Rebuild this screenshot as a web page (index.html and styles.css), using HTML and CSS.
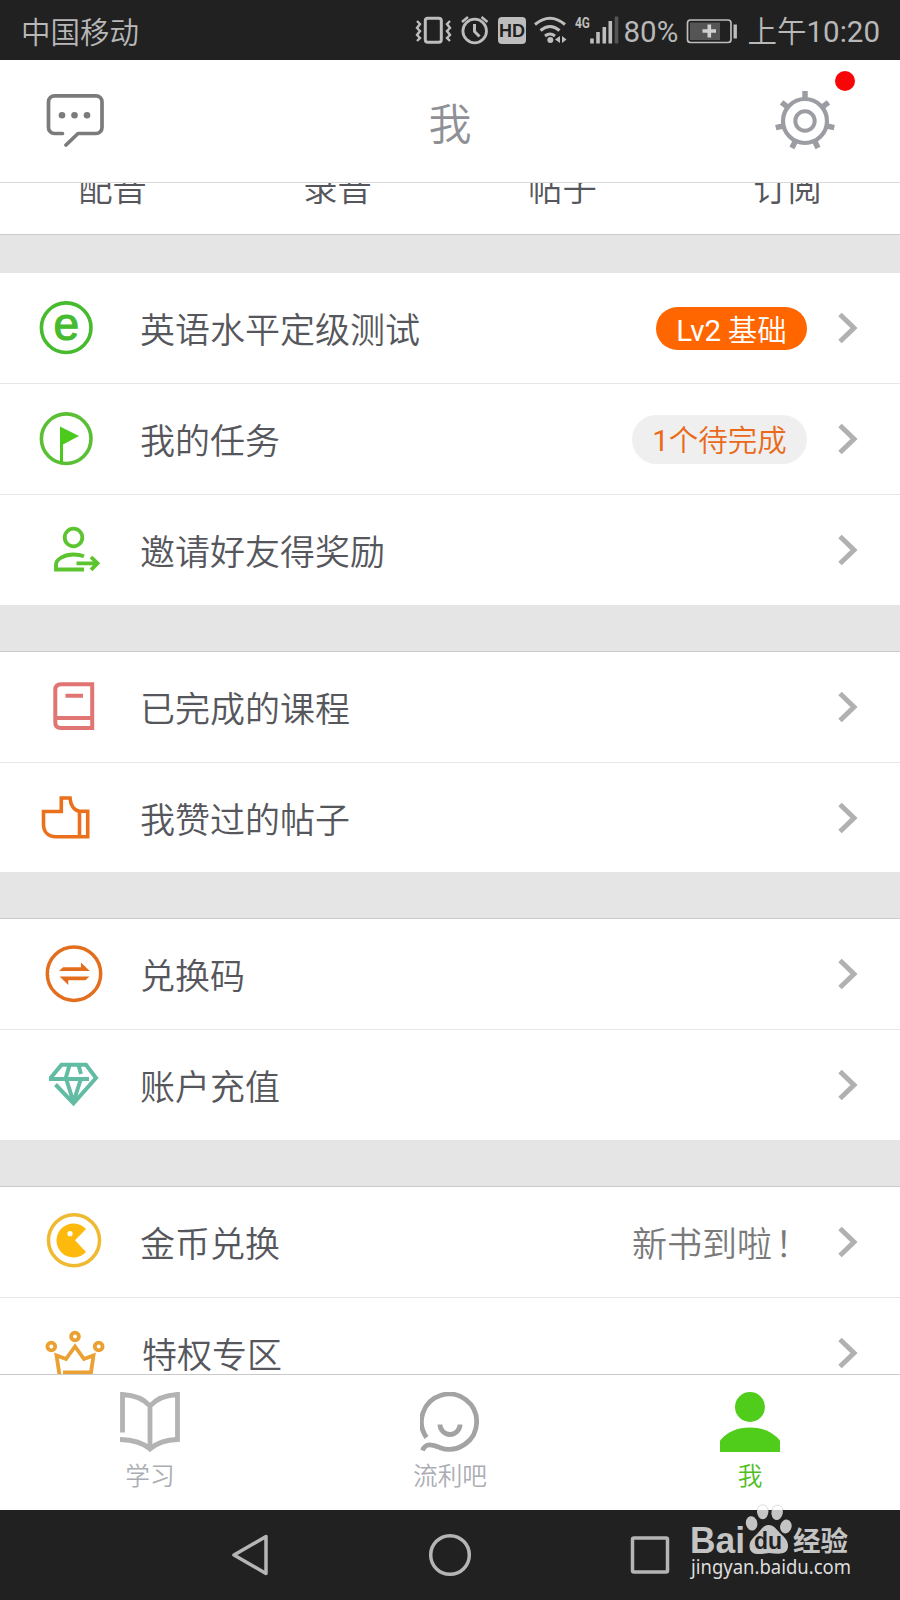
FILE: index.html
```
<!DOCTYPE html>
<html lang="zh-CN">
<head>
    <meta charset="UTF-8">
    <meta name="viewport" content="width=device-width, initial-scale=1.0">
    <title>我</title>
    <link rel="stylesheet" href="styles.css">
</head>
<body>
<div class="phone">
    <!-- Status bar -->
    <div class="status-bar">
        <span class="carrier">中国移动</span>
        <svg class="status-icons" width="209" height="60" viewBox="411 0 209 60" fill="none" stroke="#bdbdbd">
            <rect x="425.3" y="18.3" width="16" height="24" rx="2.5" stroke-width="3"/>
            <path d="M417 21l3 3-3 4 3 3-3 4 3 3-3 3M450 21l-3 3 3 4-3 3 3 4-3 3 3 3" stroke-width="2.4"/>
            <circle cx="474.7" cy="31" r="11.8" stroke-width="2.8"/>
            <path d="M474.5 24v7.5l5 5" stroke-width="3"/>
            <path d="M462 22l6-5M487.5 22l-6-5" stroke-width="2.6"/>
            <rect x="498" y="17" width="28" height="27" rx="4" fill="#bdbdbd" stroke="none"/>
            <text x="512" y="37.3" class="hd">HD</text>
            <path d="M535 24.5q15-12.5 30 0M540.5 30.5q9.5-8 19 0M545 36q5-4 10 0" stroke-width="3"/>
            <circle cx="550.3" cy="40" r="3" fill="#bdbdbd" stroke="none"/>
            <path d="M560 36v7l-5-3.5zM562 36v7l4.5-3.5z" fill="#bdbdbd" stroke="none"/>
            <text x="575" y="28" class="net" textLength="15" lengthAdjust="spacingAndGlyphs">4G</text>
            <path d="M592 38.5v5M598 32v11.5M604.3 27v16.5M610.3 21v22.5" stroke-width="3.6"/>
            <path d="M616.5 16.5v27" stroke="#555" stroke-width="3.6"/>
        </svg>
        <span class="percent">80%</span>
        <svg class="battery" width="52" height="60" viewBox="686 0 52 60">
            <rect x="687.5" y="20" width="43.5" height="22.5" rx="3" fill="none" stroke="#bdbdbd" stroke-width="1.7"/>
            <rect x="690" y="22.5" width="30" height="17.5" fill="#555"/>
            <path d="M709.3 24.5v13M702.5 31h13.5" stroke="#d0d0d0" stroke-width="3.6"/>
            <path d="M735.2 24.5v14" stroke="#bdbdbd" stroke-width="3.4"/>
        </svg>
        <span class="clock">上午<span class="latin">10:20</span></span>
    </div>

    <!-- Header -->
    <header class="header">
        <svg class="chat" width="64" height="56" viewBox="43 91 64 56" fill="none" stroke="#7b7b7b" stroke-width="3.7" stroke-linecap="round" stroke-linejoin="round">
            <path d="M62.5 133.5H54.5a6 6 0 0 1-6-6V101.8a6 6 0 0 1 6-6H96a6 6 0 0 1 6 6v25.7a6 6 0 0 1-6 6H78L66 145"/>
            <g fill="#7b7b7b" stroke="none"><circle cx="62" cy="115.2" r="3.3"/><circle cx="74.5" cy="115.2" r="3.3"/><circle cx="87" cy="115.2" r="3.3"/></g>
        </svg>
        <h1 class="title">我</h1>
        <div class="settings">
            <svg width="64" height="64" viewBox="-32 -32 64 64" fill="none" stroke="#9b9da3">
                <circle r="22" stroke-width="4.2"/>
                <circle r="9.7" stroke-width="4"/>
                <g stroke-width="5.5">
                    <path d="M0-22.5V-30"/>
                    <path d="M0-22.5V-30" transform="rotate(51.43)"/>
                    <path d="M0-22.5V-30" transform="rotate(102.86)"/>
                    <path d="M0-22.5V-30" transform="rotate(154.29)"/>
                    <path d="M0-22.5V-30" transform="rotate(205.71)"/>
                    <path d="M0-22.5V-30" transform="rotate(257.14)"/>
                    <path d="M0-22.5V-30" transform="rotate(308.57)"/>
                </g>
            </svg>
            <span class="red-dot"></span>
        </div>
    </header>

    <!-- Scrolled list -->
    <main class="content">
        <div class="stats">
            <span>配音</span>
            <span>录音</span>
            <span>帖子</span>
            <span>订阅</span>
        </div>

        <section class="group">
            <div class="row">
                <svg class="icon" viewBox="0 0 120 110">
                    <circle cx="66.2" cy="54.7" r="24.8" fill="none" stroke="#46bb2e" stroke-width="3.6"/>
                    <text x="66.2" y="66.5" class="e-mark">e</text>
                </svg>
                <span class="label">英语水平定级测试</span>
                <span class="badge level"><span class="latin">Lv2</span> 基础</span>
                <svg class="arrow" viewBox="0 0 20 32"><path d="M2 2.5l14 13.5-14 13.5"/></svg>
            </div>
            <div class="row">
                <svg class="icon" viewBox="0 0 120 110">
                    <circle cx="66.2" cy="54.7" r="24.8" fill="none" stroke="#5abf35" stroke-width="3.6"/>
                    <path d="M60 42.5L79 52 63 60.5V79H60z" fill="#4bc91c"/>
                </svg>
                <span class="label">我的任务</span>
                <span class="badge todo"><span class="latin">1</span>个待完成</span>
                <svg class="arrow" viewBox="0 0 20 32"><path d="M2 2.5l14 13.5-14 13.5"/></svg>
            </div>
            <div class="row">
                <svg class="icon" viewBox="0 0 120 110" fill="none" stroke="#5bc42f" stroke-width="3.8">
                    <circle cx="73.5" cy="42.5" r="8.8"/>
                    <path d="M84 61.3C80 59.7 77 59.5 73.5 59.5 64 59.5 56 64.5 56 69.5V74.5H84"/>
                    <path d="M76.5 68.3H97M91 62l6.5 6.3L91 74.8"/>
                </svg>
                <span class="label">邀请好友得奖励</span>
                <svg class="arrow" viewBox="0 0 20 32"><path d="M2 2.5l14 13.5-14 13.5"/></svg>
            </div>
        </section>

        <section class="group courses">
            <div class="row">
                <svg class="icon" viewBox="0 0 120 110" fill="none" stroke="#e07573" stroke-width="4">
                    <path d="M92.2 76V32.3H61q-5.7 0-5.7 5.7V70.5q0 5.5 5.7 5.5H94.2M92.2 32.3h2M55.3 66H92M65.5 43.8H83"/>
                </svg>
                <span class="label">已完成的课程</span>
                <svg class="arrow" viewBox="0 0 20 32"><path d="M2 2.5l14 13.5-14 13.5"/></svg>
            </div>
            <div class="row">
                <svg class="icon" viewBox="0 0 120 110" fill="none" stroke="#ea701b" stroke-width="3.6">
                    <path d="M43.5 48.5H61.3V35H70C70.5 42 74 47.5 79.5 48.3H87.7V73.7H56C48 73.7 43.5 69 43.5 61zM79.5 48V73"/>
                </svg>
                <span class="label">我赞过的帖子</span>
                <svg class="arrow" viewBox="0 0 20 32"><path d="M2 2.5l14 13.5-14 13.5"/></svg>
            </div>
        </section>

        <section class="group">
            <div class="row">
                <svg class="icon" viewBox="0 0 120 110" fill="#e36f1e">
                    <circle cx="74" cy="54.7" r="26.7" fill="none" stroke="#e36f1e" stroke-width="3.5"/>
                    <path d="M59 52l4-3.7H81V43.5L89.8 52zM89.5 57.5l-4 3.7H68.3V66L59.5 57.5z"/>
                </svg>
                <span class="label">兑换码</span>
                <svg class="arrow" viewBox="0 0 20 32"><path d="M2 2.5l14 13.5-14 13.5"/></svg>
            </div>
            <div class="row">
                <svg class="icon" viewBox="0 0 120 110" fill="none" stroke="#61bca3" stroke-width="4">
                    <path d="M89 49H51V47.5L61.5 34.8H86L96 48 73.5 73.3 55.5 54.5M69.5 35L65.8 48M78.5 35L81 44M66.5 50L73.5 72M80.5 50L73.5 72"/>
                </svg>
                <span class="label">账户充值</span>
                <svg class="arrow" viewBox="0 0 20 32"><path d="M2 2.5l14 13.5-14 13.5"/></svg>
            </div>
        </section>

        <section class="group">
            <div class="row">
                <svg class="icon" viewBox="0 0 120 110">
                    <circle cx="74" cy="53.3" r="25.5" fill="none" stroke="#efba32" stroke-width="3.5"/>
                    <path d="M75 53.3L86 42A17 17 0 1 0 86 65z" fill="#fdb90c"/>
                    <circle cx="70" cy="46.7" r="2.6" fill="#fff"/>
                </svg>
                <span class="label">金币兑换</span>
                <span class="note">新书到啦<span class="mark">！</span></span>
                <svg class="arrow" viewBox="0 0 20 32"><path d="M2 2.5l14 13.5-14 13.5"/></svg>
            </div>
            <div class="row">
                <svg class="icon" viewBox="0 0 120 110" fill="none" stroke="#eba032" stroke-width="3.8">
                    <circle cx="75" cy="38.5" r="3.9"/>
                    <circle cx="51.3" cy="48.5" r="3.9"/>
                    <circle cx="98.7" cy="48.5" r="3.9"/>
                    <path d="M60 80L56.5 57.5 66 61 75 48.5 84 61 93.5 57.5 91 74.5H63"/>
                </svg>
                <span class="label shifted">特权专区</span>
                <svg class="arrow" viewBox="0 0 20 32"><path d="M2 2.5l14 13.5-14 13.5"/></svg>
            </div>
        </section>
    </main>

    <!-- Tab bar -->
    <nav class="tab-bar">
        <a class="tab">
            <svg width="60" height="60" viewBox="0 0 60 60" fill="none" stroke="#b3b3b3" stroke-width="4.8">
                <path d="M2.5 40.5V2.5Q21 3.5 30 14 39 3.5 57.5 2.5V47.5Q40 48 30 57 20 48 0 47.5M30 13V57"/>
            </svg>
            <span>学习</span>
        </a>
        <a class="tab">
            <svg width="60" height="60" viewBox="0 0 60 60" fill="none" stroke="#a3a3a3" stroke-width="4.8">
                <path d="M6.5 45.5A27.6 27.6 0 1 1 20 55.7C14 53.5 6 49.5 2.5 58.5"/>
                <path d="M20 32.5a10 10 0 0 0 20 0"/>
            </svg>
            <span>流利吧</span>
        </a>
        <a class="tab active">
            <svg width="60" height="60" viewBox="0 0 60 60" fill="#4fcd1a">
                <circle cx="30" cy="15" r="15"/>
                <path d="M0 60V48.5Q11 35.5 30 35.5T60 48.5V60z"/>
            </svg>
            <span>我</span>
        </a>
    </nav>

    <!-- Android navigation keys -->
    <div class="nav-keys">
        <svg width="44" height="50" viewBox="0 0 44 50"><path d="M38 6.5V43.5L6 25z"/></svg>
        <svg width="44" height="50" viewBox="0 0 44 50"><circle cx="22" cy="25" r="19.3"/></svg>
        <svg width="44" height="50" viewBox="0 0 44 50"><rect x="4.5" y="8" width="35" height="34" rx="1.5"/></svg>
    </div>

    <div class="watermark">
        <svg width="170" height="100" viewBox="685 1500 170 100" fill="#c4c4c4">
            <ellipse cx="762.7" cy="1511.5" rx="5.7" ry="7.8"/>
            <ellipse cx="777.2" cy="1512.5" rx="5.7" ry="7.5" transform="rotate(10 777 1512)"/>
            <ellipse cx="751.5" cy="1523.5" rx="5.7" ry="7.2" transform="rotate(-12 751 1523)"/>
            <ellipse cx="786" cy="1526.5" rx="5.7" ry="7" transform="rotate(14 786 1526)"/>
            <path d="M756 1502h28v8h-28z" fill="#fff"/>
            <path d="M757.2 1510a5.7 7 0 0 1 11 0M772 1510a5.7 6.5 0 0 1 11 0" fill="none" stroke="#dcdcdc"/>
            <path d="M768.5 1525C774 1525 777 1530 781 1534 786 1538.5 788.5 1542 788 1547 787 1555 779 1554 769 1553 758 1555 749.5 1555 749.5 1546 749.5 1541 753 1538 757 1534 761 1530 763 1525 768.5 1525z"/>
            <text x="690" y="1553" class="bai" textLength="55" lengthAdjust="spacingAndGlyphs">Bai</text>
            <text x="768" y="1549" class="du">du</text>
            <text x="793" y="1551" class="jy">经验</text>
            <text x="691" y="1574" class="url" textLength="160" lengthAdjust="spacingAndGlyphs">jingyan.baidu.com</text>
        </svg>
    </div>
</div>
</body>
</html>
```

FILE: styles.css
```
* {
    box-sizing: border-box;
}

body {
    margin: 0;
    font-family: "Noto Sans CJK SC", sans-serif;
    font-weight: 350;
    background-color: #e5e5e5;
    color: #56575c;
}

.latin {
    font-family: Roboto, sans-serif;
    font-weight: 400;
}

.phone {
    position: relative;
    width: 900px;
    height: 1600px;
    overflow: hidden;
    display: flex;
    flex-direction: column;
}

/* Status bar */
.status-bar {
    height: 60px;
    flex: none;
    display: flex;
    align-items: center;
    padding: 0 20px 0 21px;
    background: #212121;
    color: #b8b8b8;
    font-size: 29.5px;
    line-height: 58px;
    white-space: nowrap;
}

.status-icons {
    margin-left: auto;
}

.percent {
    width: 62px;
    margin-left: 4px;
    padding-top: 4px;
    font-family: Roboto, sans-serif;
    font-weight: 400;
}

.battery {
    flex: none;
}

.clock {
    margin-left: 10px;
}

.hd {
    font: bold 18px "Liberation Sans", sans-serif;
    fill: #212121;
    stroke: none;
    text-anchor: middle;
}

.net {
    font: bold 15px Roboto, sans-serif;
    fill: #bdbdbd;
    stroke: none;
}

/* Header */
.header {
    height: 123px;
    flex: none;
    display: flex;
    align-items: center;
    justify-content: space-between;
    padding: 0 63px 0 43px;
    background: white;
    border-bottom: 1px solid #d9d9d9;
}

.chat {
    margin-bottom: 4px;
}

.title {
    margin: 0;
    padding-left: 20px;
    font-size: 43px;
    font-weight: 350;
    color: #8f9095;
}

.settings {
    position: relative;
    height: 64px;
}

.red-dot {
    position: absolute;
    top: -18px;
    right: -18px;
    width: 20px;
    height: 20px;
    border-radius: 50%;
    background: #f60606;
}

/* List */
.content {
    flex: 1;
    min-height: 0;
    overflow: hidden;
}

.stats {
    height: 52px;
    display: flex;
    align-items: flex-end;
    overflow: hidden;
    background: white;
    border-bottom: 1px solid #cbcbcb;
    margin-bottom: 38px;
    padding-bottom: 23px;
}

.stats span {
    width: 25%;
    text-align: center;
    font-size: 34.3px;
    line-height: 50px;
}

.group {
    background: white;
    margin-bottom: 46px;
}

.group + .group {
    border-top: 1px solid #cbcbcb;
}

.row {
    height: 111px;
    display: flex;
    align-items: center;
    padding-right: 42px;
    border-bottom: 1px solid #e6e6e6;
}

.row:last-child {
    height: 110px;
    border-bottom: none;
}

.courses .row:last-child {
    height: 109px;
}

.icon {
    width: 120px;
    height: 110px;
    flex: none;
}

.e-mark {
    font: 46px "Liberation Sans", sans-serif;
    fill: #46bb2e;
    stroke: #46bb2e;
    stroke-width: 1.2;
    text-anchor: middle;
}

.label {
    flex: 1;
    padding-left: 20px;
    padding-bottom: 1px;
    font-size: 35px;
}

.shifted {
    padding-left: 22px;
}

.badge {
    border-radius: 25px;
    font-size: 29.5px;
    text-align: center;
}

.level {
    width: 151px;
    height: 43px;
    line-height: 42px;
    background: #ff6600;
    color: white;
}

.todo {
    width: 175px;
    height: 49px;
    line-height: 47px;
    background: #efefef;
    color: #ea6a19;
}

.note {
    width: 175px;
    padding-bottom: 1px;
    font-size: 35px;
    color: #7a7a7a;
    white-space: nowrap;
}

.mark {
    padding-left: 3px;
}

.arrow {
    width: 20px;
    height: 32px;
    margin-left: 31px;
    flex: none;
    fill: none;
    stroke: #b1b1b1;
    stroke-width: 5;
}

/* Tab bar */
.tab-bar {
    height: 136px;
    flex: none;
    display: flex;
    background: white;
    border-top: 1px solid #c9c9c9;
}

.tab {
    flex: 1;
    display: flex;
    flex-direction: column;
    align-items: center;
    padding-top: 17px;
    font-size: 24.7px;
    line-height: 45px;
    color: #abadb3;
}

.active {
    color: #4fc01f;
}

/* Navigation keys */
.nav-keys {
    height: 90px;
    flex: none;
    display: flex;
    justify-content: space-between;
    align-items: center;
    padding: 0 228px;
    background: #212121;
}

.nav-keys svg {
    fill: none;
    stroke: #b5b5b5;
    stroke-width: 3.5;
    stroke-linejoin: round;
}

.watermark {
    position: absolute;
    left: 685px;
    top: 1500px;
}

.bai {
    font: bold 36px "Liberation Sans", sans-serif;
}

.du {
    font: bold 23px "Liberation Sans", sans-serif;
    fill: #212121;
    text-anchor: middle;
}

.jy {
    font: bold 27.5px "Noto Sans CJK SC", sans-serif;
}

.url {
    font: 20px "Noto Sans", sans-serif;
    fill: #dedede;
}
```
